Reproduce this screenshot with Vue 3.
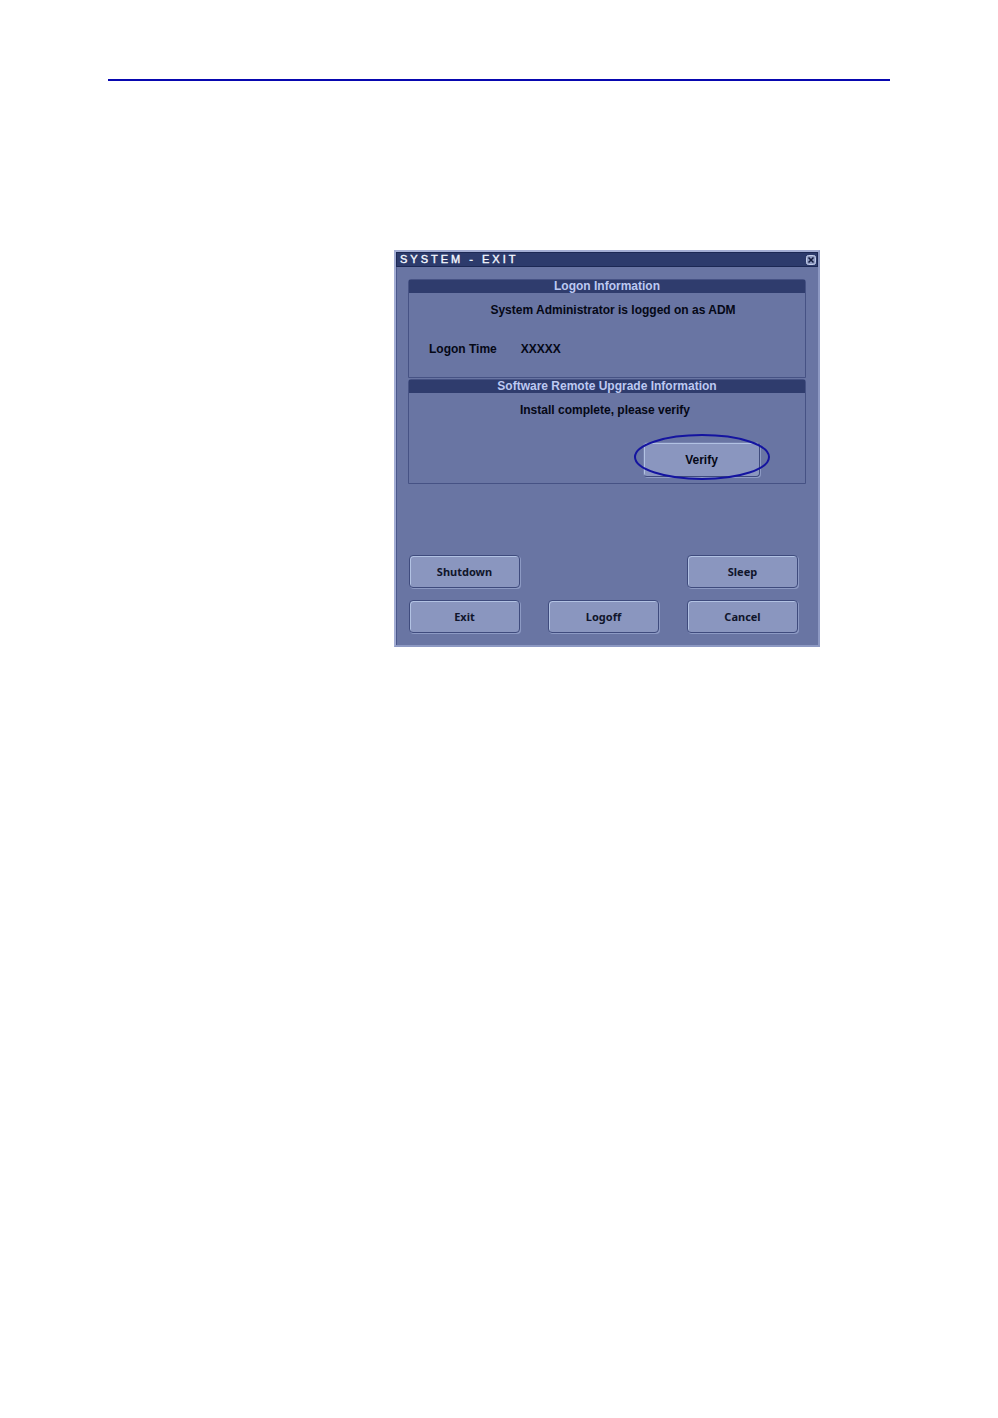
<template>
  <div class="page">
    <hr class="page-rule" />
    <section class="dialog" role="dialog" aria-labelledby="dialog-title">
      <header class="title-bar">
        <h1 id="dialog-title">SYSTEM - EXIT</h1>
        <button class="close" type="button" aria-label="Close">
          <svg viewBox="0 0 10 10" aria-hidden="true">
            <rect x="0.5" y="0.5" width="9" height="9" rx="2" />
            <path d="M2.5 2.5L7.5 7.5M7.5 2.5L2.5 7.5" />
          </svg>
        </button>
      </header>

      <div class="dialog-body">
        <section class="panel logon">
          <h2>Logon Information</h2>
          <p class="message">System Administrator is logged on as ADM</p>
          <dl class="logon-time">
            <dt>Logon Time</dt>
            <dd>XXXXX</dd>
          </dl>
        </section>

        <section class="panel upgrade">
          <h2>Software Remote Upgrade Information</h2>
          <p class="message">Install complete, please verify</p>
          <div class="verify-row">
            <div class="verify-wrap">
              <button class="btn verify" type="button">Verify</button>
              <svg class="callout" viewBox="0 0 138 48" aria-hidden="true">
                <ellipse cx="69" cy="24" rx="67" ry="22" />
              </svg>
            </div>
          </div>
        </section>

        <div class="actions">
          <button
            v-for="action in actions"
            :key="action.label"
            :class="['btn', action.place]"
            type="button"
          >
            {{ action.label }}
          </button>
        </div>
      </div>
    </section>
  </div>
</template>

<script setup>
const actions = [
  { label: 'Shutdown', place: 'first' },
  { label: 'Sleep', place: 'last' },
  { label: 'Exit', place: 'first' },
  { label: 'Logoff', place: 'middle' },
  { label: 'Cancel', place: 'last' }
];
</script>

<style>
body {
  background: #fff;
}
</style>

<style scoped>
* {
  box-sizing: border-box;
}

.page {
  padding: 79px 108px;
  font-family: "Liberation Sans", Arial, sans-serif;
  font-size: 12px;
  font-weight: 700;
  line-height: 14px;
  color: #050816;
}

.page-rule {
  height: 2px;
  margin: 0 0 169px;
  border: 0;
  background: #0808b0;
}

.dialog {
  width: 426px;
  max-width: 100%;
  margin: 0 70px 0 auto;
  border: 2px solid #a4aed4;
  border-right-color: #8d99c3;
  border-bottom-color: #8d99c3;
  background: #6975a3;
}

.title-bar {
  display: flex;
  align-items: center;
  justify-content: space-between;
  height: 15px;
  padding: 0 1px 0 3px;
  border: 1px solid #1c2854;
  background: #2d3b6c;
}

.title-bar h1 {
  margin: 0;
  color: #f4f8ff;
  font-size: 11px;
  font-weight: 400;
  line-height: 13px;
  letter-spacing: 3px;
  -webkit-text-stroke: 0.4px #f4f8ff;
}

.close {
  width: 10px;
  height: 10px;
  padding: 0;
  border: 0;
  background: none;
}

.close svg {
  display: block;
  width: 10px;
  height: 10px;
}

.close rect {
  fill: #8f9bc2;
  stroke: #c3cde8;
}

.close path {
  fill: none;
  stroke: #10183a;
  stroke-width: 1.5;
}

.dialog-body {
  padding: 12px 12px 12px 11px;
  border-left: 1px solid #4b578b;
}

.panel {
  border: 1px solid #465284;
  border-radius: 3px 3px 0 0;
}

.panel h2 {
  height: 13px;
  margin: 0;
  background: #2f3c6d;
  color: #bdc9f2;
  font-size: 12px;
  line-height: 13px;
  text-align: center;
}

.message {
  margin: 10px 0 0;
  text-align: center;
}

.logon {
  height: 99px;
}

.logon .message {
  padding-left: 12px;
}

.upgrade {
  height: 105px;
  margin-top: 1px;
}

.upgrade .message {
  padding-right: 4px;
}

.logon-time {
  display: flex;
  gap: 24px;
  margin: 25px 0 0 20px;
}

.logon-time dd {
  margin: 0;
}

.btn {
  height: 33px;
  padding: 0;
  border: 1px solid #3f4b7d;
  border-radius: 4px;
  background: #8a96bf;
  box-shadow: inset 1px 1px 0 #b2c2e3, 1px 1px 0 #8d9ac4;
  color: #10152b;
  font-family: "Noto Sans", sans-serif;
  font-size: 11px;
  font-weight: 700;
  line-height: 14px;
}

.verify-row {
  display: flex;
  justify-content: flex-end;
  margin: 25px 45px 0 0;
}

.verify-wrap {
  position: relative;
}

.verify {
  display: block;
  width: 117px;
  height: 35px;
  border-color: #7783af #3f4b7d #3f4b7d #7783af;
  color: #050816;
  font-family: "Liberation Sans", Arial, sans-serif;
  font-size: 12px;
}

/* hand-marked ring around the Verify button */
.callout {
  position: absolute;
  top: -9px;
  left: -10px;
  width: 138px;
  height: 48px;
  fill: none;
  stroke: #1414a0;
  stroke-width: 2;
  pointer-events: none;
}

.actions {
  display: grid;
  grid-template-columns: repeat(3, 111px);
  gap: 12px 28px;
  margin-top: 71px;
  padding-left: 1px;
}

.first {
  grid-column: 1;
}

.middle {
  grid-column: 2;
}

.last {
  grid-column: 3;
}
</style>
